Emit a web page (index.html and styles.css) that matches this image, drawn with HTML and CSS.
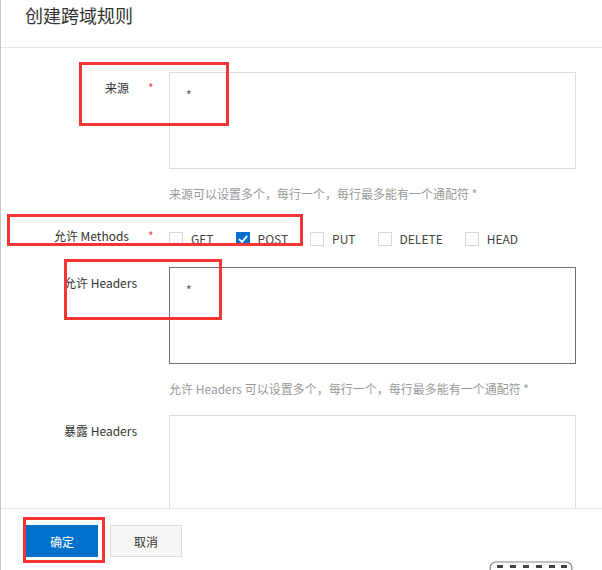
FILE: index.html
```html
<!DOCTYPE html>
<html lang="zh-CN">
<head>
<meta charset="utf-8">
<title>创建跨域规则</title>
<link rel="stylesheet" href="styles.css">
</head>
<body>
<div class="panel">
  <div class="header"><h1 class="title">创建跨域规则</h1></div>
  <div class="content">
    <div class="row">
      <div class="label req">来源<span class="star">*</span></div>
      <div class="field">
        <div class="textarea">*</div>
        <div class="help">来源可以设置多个，每行一个，每行最多能有一个通配符 *</div>
      </div>
    </div>
    <div class="row row-methods">
      <div class="label req">允许 Methods<span class="star">*</span></div>
      <div class="field checks">
        <label class="check"><span class="box"></span>GET</label>
        <label class="check"><span class="box on"><svg viewBox="0 0 14 14" width="14" height="14"><path d="M3 7.2 L6 10 L11.2 3.8" fill="none" stroke="#fff" stroke-width="1.8"/></svg></span>POST</label>
        <label class="check"><span class="box"></span>PUT</label>
        <label class="check"><span class="box"></span>DELETE</label>
        <label class="check"><span class="box"></span>HEAD</label>
      </div>
    </div>
    <div class="row row-headers">
      <div class="label">允许 Headers</div>
      <div class="field">
        <div class="textarea focus">*</div>
        <div class="help">允许 Headers 可以设置多个，每行一个，每行最多能有一个通配符 *</div>
      </div>
    </div>
    <div class="row row-expose">
      <div class="label">暴露 Headers</div>
      <div class="field">
        <div class="textarea"></div>
      </div>
    </div>
  </div>
  <div class="footer">
    <button class="btn primary">确定</button>
    <button class="btn">取消</button>
  </div>

  <div class="mark m1"></div>
  <div class="mark m2"></div>
  <div class="mark m3"></div>
  <div class="mark m4"></div>

  <svg class="pill" width="86" height="14" viewBox="0 0 86 14">
    <rect x="2" y="2" width="82" height="12" rx="6" fill="#fff" stroke="#888" stroke-width="1.2"/>
    <g fill="#444">
      <rect x="9" y="5" width="6" height="3"/>
      <rect x="22" y="5" width="6" height="3"/>
      <rect x="35" y="5" width="6" height="3"/>
      <rect x="48" y="5" width="6" height="3"/>
      <rect x="61" y="5" width="6" height="3"/>
      <rect x="73" y="5" width="6" height="3"/>
    </g>
  </svg>
</div>
</body>
</html>
```

FILE: styles.css
```css
html, body {
  margin: 0;
  padding: 0;
  background: #fff;
}
body {
  width: 602px;
  height: 570px;
  overflow: hidden;
  font-family: "Noto Sans CJK SC", "Noto Sans", sans-serif;
  font-size: 12px;
  color: #333;
}
.panel {
  position: relative;
  height: 570px;
  border-left: 1px solid #c8c8c8;
  box-sizing: border-box;
  display: flex;
  flex-direction: column;
}
.header {
  height: 47px;
  border-bottom: 1px solid #e5e5e5;
  flex: none;
}
.title {
  margin: 0;
  padding: 3px 0 0 24px;
  font-size: 18px;
  font-weight: normal;
  line-height: 24px;
  color: #333;
}
.content {
  height: 460px;
  overflow: hidden;
  padding-top: 24px;
  box-sizing: border-box;
  flex: none;
}
.row {
  display: flex;
}
.label {
  width: 168px;
  box-sizing: border-box;
  text-align: right;
  padding: 8px 32px 0 0;
  line-height: 16px;
  flex: none;
}
.label.req {
  padding-right: 16px;
}
.star {
  color: #e84a4a;
  margin-left: 19px;
  display: inline-block;
  width: 5px;
  text-align: left;
}
.field {
  width: 407px;
}
.textarea {
  height: 97px;
  box-sizing: border-box;
  border: 1px solid #dcdcdc;
  padding: 14px 16px 12px;
  line-height: 16px;
  color: #555;
}
.textarea.focus {
  border-color: #707070;
}
.help {
  margin-top: 17px;
  line-height: 16px;
  color: #999;
}
.row-methods {
  margin-top: 26px;
}
.row-methods .label {
  padding-top: 0;
}
.checks {
  display: flex;
  align-items: center;
  margin-top: 4px;
  height: 14px;
}
.check {
  display: flex;
  align-items: center;
  margin-right: 22px;
  line-height: 14px;
  color: #444;
}
.box {
  width: 14px;
  height: 14px;
  box-sizing: border-box;
  border: 1px solid #d8d8d8;
  background: #fff;
  margin-right: 8px;
  display: block;
}
.box.on {
  background: #0070cc;
  border-color: #0070cc;
}
.box.on svg {
  display: block;
  margin: -1px;
}
.row-headers {
  margin-top: 21px;
}
.row-expose {
  margin-top: 18px;
}
.footer {
  flex: none;
  border-top: 1px solid #e5e5e5;
  padding: 16px 0 0 25px;
  display: flex;
  gap: 12px;
  height: 61px;
  box-sizing: border-box;
}
.btn {
  width: 72px;
  height: 32px;
  border: 1px solid #dcdcdc;
  background: #f7f7f7;
  color: #333;
  font-family: inherit;
  font-size: 12px;
  padding: 0;
  cursor: pointer;
}
.btn.primary {
  background: #0070cc;
  border-color: #0070cc;
  color: #fff;
}
.mark {
  position: absolute;
  border: 3px solid #f23636;
  box-sizing: border-box;
}
.m1 { left: 78px; top: 62px; width: 150px; height: 64px; }
.m2 { left: 6px; top: 214px; width: 296px; height: 32px; }
.m3 { left: 63px; top: 259px; width: 158px; height: 61px; }
.m4 { left: 22px; top: 517px; width: 82px; height: 46px; }
.pill {
  position: absolute;
  left: 487px;
  top: 560px;
}
```
